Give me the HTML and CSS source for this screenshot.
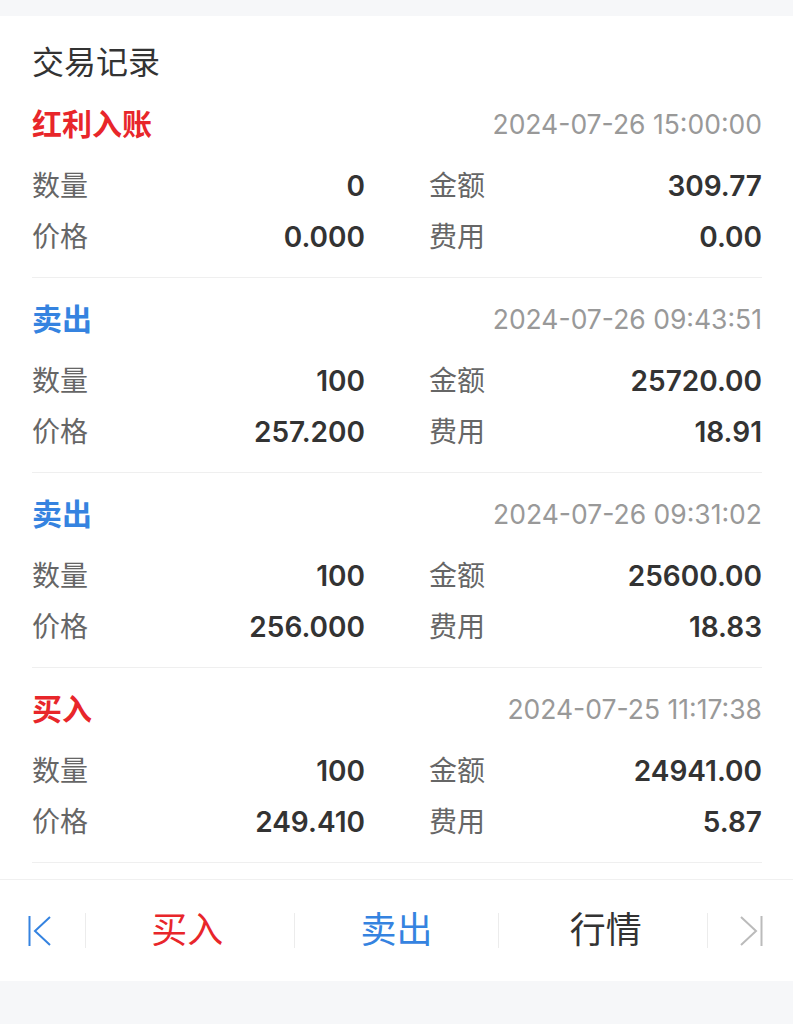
FILE: index.html
```html
<!DOCTYPE html>
<html lang="zh-CN">
<head>
	<meta charset="utf-8" />
	<title>交易记录</title>
	<link rel="stylesheet" href="styles.css">
</head>
<body>
	<div class="page">
		<div class="panel">
			<h1 class="title">交易记录</h1>

			<div class="record">
				<div class="record-head">
					<span class="type red">红利入账</span>
					<span class="time">2024-07-26 15:00:00</span>
				</div>
				<div class="grid">
					<div class="cell"><span class="label">数量</span><span class="value">0</span></div>
					<div class="cell"><span class="label">金额</span><span class="value">309.77</span></div>
					<div class="cell"><span class="label">价格</span><span class="value">0.000</span></div>
					<div class="cell"><span class="label">费用</span><span class="value">0.00</span></div>
				</div>
			</div>

			<div class="record">
				<div class="record-head">
					<span class="type blue">卖出</span>
					<span class="time">2024-07-26 09:43:51</span>
				</div>
				<div class="grid">
					<div class="cell"><span class="label">数量</span><span class="value">100</span></div>
					<div class="cell"><span class="label">金额</span><span class="value">25720.00</span></div>
					<div class="cell"><span class="label">价格</span><span class="value">257.200</span></div>
					<div class="cell"><span class="label">费用</span><span class="value">18.91</span></div>
				</div>
			</div>

			<div class="record">
				<div class="record-head">
					<span class="type blue">卖出</span>
					<span class="time">2024-07-26 09:31:02</span>
				</div>
				<div class="grid">
					<div class="cell"><span class="label">数量</span><span class="value">100</span></div>
					<div class="cell"><span class="label">金额</span><span class="value">25600.00</span></div>
					<div class="cell"><span class="label">价格</span><span class="value">256.000</span></div>
					<div class="cell"><span class="label">费用</span><span class="value">18.83</span></div>
				</div>
			</div>

			<div class="record">
				<div class="record-head">
					<span class="type red">买入</span>
					<span class="time">2024-07-25 11:17:38</span>
				</div>
				<div class="grid">
					<div class="cell"><span class="label">数量</span><span class="value">100</span></div>
					<div class="cell"><span class="label">金额</span><span class="value">24941.00</span></div>
					<div class="cell"><span class="label">价格</span><span class="value">249.410</span></div>
					<div class="cell"><span class="label">费用</span><span class="value">5.87</span></div>
				</div>
			</div>
		</div>

		<div class="toolbar">
			<a href="#" class="tool-icon first">
				<svg width="24" height="32" viewBox="0 0 24 32">
					<line x1="1.5" y1="1" x2="1.5" y2="31" stroke="#3583e0" stroke-width="2" />
					<polyline points="22,2 7,16 22,30" fill="none" stroke="#3583e0" stroke-width="2" />
				</svg>
			</a>
			<span class="sep"></span>
			<a href="#" class="tool red">买入</a>
			<span class="sep"></span>
			<a href="#" class="tool blue">卖出</a>
			<span class="sep"></span>
			<a href="#" class="tool dark">行情</a>
			<span class="sep"></span>
			<a href="#" class="tool-icon last">
				<svg width="24" height="32" viewBox="0 0 24 32">
					<polyline points="2,2 17,16 2,30" fill="none" stroke="#bbbbbb" stroke-width="2" />
					<line x1="22.5" y1="1" x2="22.5" y2="31" stroke="#bbbbbb" stroke-width="2" />
				</svg>
			</a>
		</div>
	</div>
</body>
</html>
```

FILE: styles.css
```css
body {
	margin: 0;
	background-color: #f6f7f9;
	font-family: Inter, "Noto Sans CJK SC", sans-serif;
	color: #333;
}

.page {
	padding-top: 16px;
}

.panel {
	background-color: #fff;
	padding: 0 31px 16px 32px;
}

	.panel .title {
		margin: 0;
		padding-top: 27px;
		font-size: 32px;
		line-height: 40px;
		font-weight: normal;
		color: #333;
	}

.record {
	padding: 21px 0 15px;
	border-bottom: 1px solid #efefef;
}

	.record .record-head {
		display: flex;
		justify-content: space-between;
		align-items: center;
		height: 40px;
		margin-bottom: 16px;
	}

	/* cjk glyphs sit a little low next to latin text */
	.record .type {
		padding-bottom: 4px;
		font-size: 30px;
		font-weight: bold;
	}

	.record .time {
		font-size: 26.5px;
		color: #999;
	}

.grid {
	display: grid;
	grid-template-columns: 1fr 1fr;
	column-gap: 64px;
}

	.grid .cell {
		display: flex;
		justify-content: space-between;
		align-items: center;
		height: 51px;
		font-size: 28px;
	}

	.grid .label {
		padding-bottom: 4px;
		color: #666;
	}

	.grid .value {
		font-weight: 600;
		color: #333;
	}

.red {
	color: #e8262a;
}

.blue {
	color: #3583e0;
}

.dark {
	color: #333;
}

.toolbar {
	display: flex;
	align-items: center;
	height: 101px;
	padding: 0 30px 0 28px;
	background-color: #fff;
	border-top: 1px solid #f0f0f0;
}

	.toolbar .sep {
		width: 1px;
		height: 35px;
		background-color: #ececec;
	}

	.toolbar .tool {
		flex: 1;
		padding-bottom: 7px;
		text-align: center;
		font-size: 36px;
		text-decoration: none;
	}

	.toolbar .tool.red {
		padding-right: 6px;
	}

	.toolbar .tool.dark {
		padding-left: 6px;
	}

	.toolbar .tool-icon {
		display: flex;
		width: 57px;
		height: 32px;
	}

	.toolbar .tool-icon.last {
		justify-content: flex-end;
		width: 55px;
	}
```
